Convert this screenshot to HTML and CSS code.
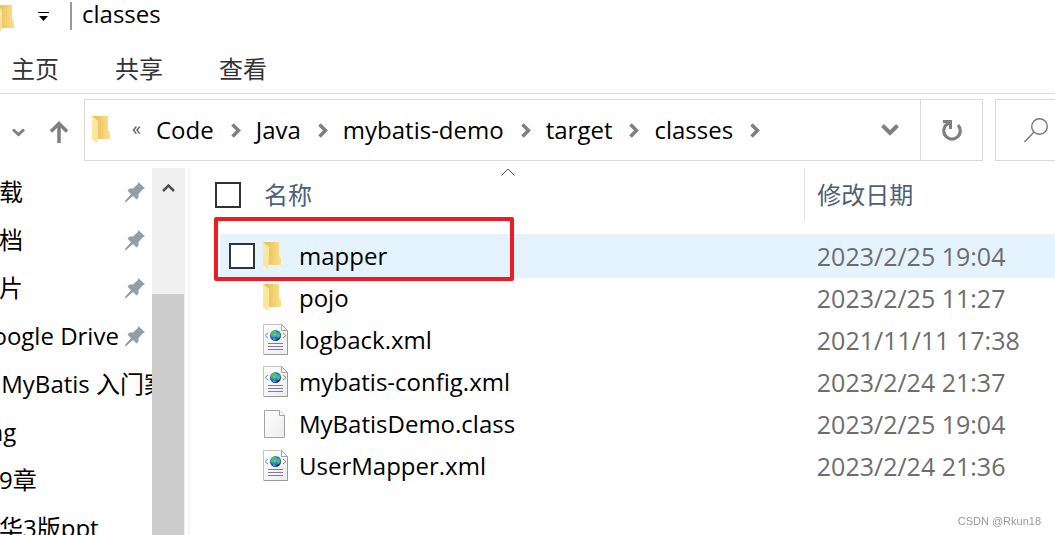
FILE: index.html
```html
<!DOCTYPE html>
<html lang="zh-CN">
<head>
  <meta charset="UTF-8" />
  <meta name="viewport" content="width=device-width, initial-scale=1.0"/>
  <title>classes</title>
  <link rel="stylesheet" href="styles.css">
</head>
<body>

  <!-- Shared icons -->
  <svg class="sprite" aria-hidden="true">
    <defs>
      <linearGradient id="folderBack" x1="0" y1="0" x2="1" y2="0">
        <stop offset="0.2" stop-color="#e9c15a"/>
        <stop offset="1" stop-color="#fbe08a"/>
      </linearGradient>
      <linearGradient id="folderFront" x1="0" y1="0" x2="0" y2="1">
        <stop offset="0" stop-color="#ffe9a8"/>
        <stop offset="1" stop-color="#ffe394"/>
      </linearGradient>
      <linearGradient id="paper" x1="0" y1="0" x2="1" y2="1">
        <stop offset="0" stop-color="#ffffff"/>
        <stop offset="1" stop-color="#ececec"/>
      </linearGradient>
      <radialGradient id="globe" cx="0.4" cy="0.35" r="0.65">
        <stop offset="0" stop-color="#7fd4ff"/>
        <stop offset="0.5" stop-color="#2a86d8"/>
        <stop offset="1" stop-color="#0b2f86"/>
      </radialGradient>
    </defs>
    <symbol id="folder" viewBox="0 0 20 28">
      <path d="M0 0h16v14l2 2v7H5z" fill="url(#folderBack)"/>
      <path d="M0 0l5 4 1 1v17l-1 5-5-4z" fill="url(#folderFront)"/>
    </symbol>
    <symbol id="xml" viewBox="0 0 26 32">
      <path d="M.5.5h18l6 6v24H.5z" fill="url(#paper)" stroke="#c4c4c4"/>
      <path d="M24.500 7v23.500H1" fill="none" stroke="#999"/>
      <path d="M18.500.5v6h6z" fill="#fff" stroke="#a5a5a5"/>
      <path d="M5 9l-3 2.500L5 14M20 9l3 2.500-3 2.500" fill="none" stroke="#888"/>
      <circle cx="12.500" cy="11.500" r="5.500" fill="url(#globe)"/>
      <path d="M8 9q2-3 4-2.500l1 2-2 2-1 2-2-1zM14 10l2-2 1.500 3-1.500 3-2-1zM10 14l3 1-1 1.500-2-1z" fill="#55c431"/>
      <path d="M5 19.500h15M5 22.500h15M5 25.500h15" stroke="#847a9c" stroke-width="1"/>
    </symbol>
    <symbol id="file" viewBox="0 0 26 32">
      <path d="M1.500 2.500h15l5 5v22h-20z" fill="url(#paper)" stroke="#a3a3a3"/>
      <path d="M16.500 2.500v5h5" fill="#fff" stroke="#a3a3a3"/>
    </symbol>
    <symbol id="pin" viewBox="0 0 20 20">
      <path d="M13.500 0L20 6.500 17.500 7.500 13.500 12 13.500 15.500 11.500 17.500 8 14 1 20H0V19L6 12 2.500 8.500 4.500 6.500H8L12.500 2.500z" fill="#929da5"/>
    </symbol>
    <symbol id="crumb" viewBox="0 0 10 15">
      <path d="M1.500 1.500l6 6-6 6" fill="none" stroke="#7f7f7f" stroke-width="3.500"/>
    </symbol>
  </svg>

  <header class="titlebar">
    <svg class="folder title-folder"><use href="#folder"/></svg>
    <button class="icon-btn customize" aria-label="自定义快速访问工具栏">
      <svg width="11" height="9" viewBox="0 0 11 9"><path d="M0 .5h11" stroke="#000"/><path d="M1 4h9L5.500 9z"/></svg>
    </button>
    <span class="divider"></span>
    <h1>classes</h1>
  </header>

  <nav class="ribbon">
    <a href="#">主页</a>
    <a href="#">共享</a>
    <a href="#">查看</a>
  </nav>

  <div class="toolbar">
    <div class="history">
      <button class="icon-btn" aria-label="最近浏览的位置">
        <svg width="13" height="9" viewBox="0 0 13 9"><path d="M1 1.500l5.500 5L12 1.500" fill="none" stroke="#7f7f7f" stroke-width="3"/></svg>
      </button>
      <button class="icon-btn" aria-label="上移">
        <svg width="18" height="22" viewBox="0 0 18 22"><path d="M9 22V3M1 10.500l8-8 8 8" fill="none" stroke="#7f7f7f" stroke-width="3.500"/></svg>
      </button>
    </div>

    <div class="address">
      <svg class="folder"><use href="#folder"/></svg>
      <span class="more">«</span>
      <ol class="crumbs">
        <li><a href="#">Code</a><svg class="crumb"><use href="#crumb"/></svg></li>
        <li><a href="#">Java</a><svg class="crumb"><use href="#crumb"/></svg></li>
        <li><a href="#">mybatis-demo</a><svg class="crumb"><use href="#crumb"/></svg></li>
        <li><a href="#">target</a><svg class="crumb"><use href="#crumb"/></svg></li>
        <li><a href="#">classes</a><svg class="crumb"><use href="#crumb"/></svg></li>
      </ol>
      <button class="icon-btn drop" aria-label="以前的位置">
        <svg width="18" height="12" viewBox="0 0 18 12"><path d="M1.500 1.500L9 9l7.500-7.500" fill="none" stroke="#7f7f7f" stroke-width="4"/></svg>
      </button>
      <button class="icon-btn refresh" aria-label="刷新">
        <svg width="20" height="21" viewBox="0 0 20 21">
          <path d="M4 5a8.300 8.300 0 1 0 12 0" fill="none" stroke="#7f7f7f" stroke-width="3.200"/>
          <path d="M1 0h9v9H7V5L4 7 2 5l2-2H1z" fill="#7f7f7f"/>
        </svg>
      </button>
    </div>

    <button class="icon-btn search" aria-label="搜索">
      <svg width="24" height="25" viewBox="0 0 24 25"><circle cx="15.500" cy="8.500" r="7.800" fill="none" stroke="#777" stroke-width="1.400"/><path d="M10 14L.5 24" stroke="#777" stroke-width="1.400"/></svg>
    </button>
  </div>

  <main class="explorer">
    <ul class="sidebar">
      <li><a href="#">下载</a><svg class="pin"><use href="#pin"/></svg></li>
      <li><a href="#">文档</a><svg class="pin"><use href="#pin"/></svg></li>
      <li><a href="#">图片</a><svg class="pin"><use href="#pin"/></svg></li>
      <li><a href="#">Google Drive</a><svg class="pin"><use href="#pin"/></svg></li>
      <li><a href="#">1. MyBatis 入门案例</a></li>
      <li><a href="#">img</a></li>
      <li><a href="#">第9章</a></li>
      <li><a href="#">清华3版ppt</a></li>
    </ul>

    <div class="scrollbar">
      <button class="icon-btn scroll-up" aria-label="向上滚动">
        <svg width="13" height="9" viewBox="0 0 13 9"><path d="M1 8l5.500-5.500L12 8" fill="none" stroke="#505050" stroke-width="2.500"/></svg>
      </button>
      <div class="thumb"></div>
    </div>

    <section class="files">
      <table>
        <thead>
          <tr>
            <th class="col-name">
              <div class="head">
                <input type="checkbox" aria-label="全选">
                <span>名称</span>
              </div>
              <svg class="sort" width="14" height="8" viewBox="0 0 14 8"><path d="M.5 7.500l6.500-6.500 6.500 6.500" fill="none" stroke="#555"/></svg>
            </th>
            <th class="col-date">修改日期</th>
          </tr>
        </thead>
        <tbody>
          <tr class="hover">
            <td>
              <div class="name"><input type="checkbox" id="mapper"><svg class="folder"><use href="#folder"/></svg><label for="mapper">mapper</label></div>
              <div class="mark"></div>
            </td>
            <td class="date">2023/2/25 19:04</td>
          </tr>
          <tr>
            <td><div class="name"><svg class="folder"><use href="#folder"/></svg>pojo</div></td>
            <td class="date">2023/2/25 11:27</td>
          </tr>
          <tr>
            <td><div class="name"><svg class="doc"><use href="#xml"/></svg>logback.xml</div></td>
            <td class="date">2021/11/11 17:38</td>
          </tr>
          <tr>
            <td><div class="name"><svg class="doc"><use href="#xml"/></svg>mybatis-config.xml</div></td>
            <td class="date">2023/2/24 21:37</td>
          </tr>
          <tr>
            <td><div class="name"><svg class="doc"><use href="#file"/></svg>MyBatisDemo.class</div></td>
            <td class="date">2023/2/25 19:04</td>
          </tr>
          <tr>
            <td><div class="name"><svg class="doc"><use href="#xml"/></svg>UserMapper.xml</div></td>
            <td class="date">2023/2/24 21:36</td>
          </tr>
        </tbody>
      </table>
    </section>
  </main>

  <div class="watermark">CSDN @Rkun18</div>

</body>
</html>
```
FILE: styles.css
```css
* {
  box-sizing: border-box;
}

body {
  margin: 0;
  height: 100vh;
  display: flex;
  flex-direction: column;
  overflow: hidden;
  background: #fff;
  color: #000;
  font-family: "Open Sans", "Noto Sans CJK SC", sans-serif;
  font-size: 24px;
  line-height: 32px;
}

a {
  color: inherit;
  text-decoration: none;
}

ul, ol {
  list-style: none;
  margin: 0;
  padding: 0;
}

svg {
  display: block;
  flex: none;
}

.sprite {
  position: absolute;
  width: 0;
  height: 0;
}

.icon-btn {
  display: flex;
  align-items: center;
  justify-content: center;
  padding: 0;
  border: 0;
  background: none;
}

.folder {
  width: 20px;
  height: 28px;
}

/* Title bar */
.titlebar {
  display: flex;
  align-items: center;
  height: 32px;
}

.title-folder {
  margin: 6px 0 0 -4px;
}

.customize {
  width: 54px;
}

.divider {
  width: 2px;
  height: 28px;
  background: #999;
}

h1 {
  margin: 0 0 4px 10px;
  font-size: 24px;
  font-weight: 400;
}

/* Ribbon tabs */
.ribbon {
  display: flex;
  align-items: center;
  gap: 56px;
  height: 62px;
  padding: 12px 12px 0 11px;
  border-bottom: 1px solid #d9d9d9;
  color: #333;
}

/* Address bar */
.toolbar {
  display: flex;
  padding-top: 5px;
}

.history {
  display: flex;
  align-items: center;
  justify-content: space-between;
  width: 84px;
  padding: 4px 16px 0 12px;
}

.address {
  flex: 1;
  display: flex;
  align-items: center;
  height: 62px;
  padding-left: 7px;
  border: 1px solid #d9d9d9;
}

.more {
  width: 44px;
  padding: 0 0 4px 20px;
  color: #555;
  font-size: 18px;
}

.crumbs {
  display: flex;
  flex: 1;
}

.crumbs li {
  display: flex;
  align-items: center;
}

.crumb {
  width: 10px;
  height: 15px;
  margin: 0 15px 0 17px;
}

.drop {
  width: 60px;
}

.refresh {
  width: 62px;
  height: 100%;
  border-left: 1px solid #d9d9d9;
}

.search {
  width: 60px;
  margin-left: 12px;
  padding-left: 20px;
  border: 1px solid #d9d9d9;
  border-right: 0;
}

/* Navigation pane */
.explorer {
  flex: 1;
  display: flex;
  min-height: 0;
  padding-top: 7px;
}

.sidebar {
  width: 152px;
  overflow: hidden;
}

.sidebar li {
  display: flex;
  align-items: center;
  height: 48px;
  margin-left: -25px;
  padding-right: 7px;
}

.sidebar a {
  flex: 1;
  overflow: hidden;
  white-space: nowrap;
}

.sidebar li:not(:has(.pin)) {
  padding-right: 0;
}

.pin {
  width: 20px;
  height: 20px;
  margin-left: 6px;
}

.scrollbar {
  display: flex;
  flex-direction: column;
  width: 33px;
  background: #f0f0f0;
}

.scroll-up {
  height: 38px;
}

.thumb {
  flex: 1;
  margin: 88px 1px 0 0;
  background: #cdcdcd;
}

/* File list */
.files {
  flex: 1;
  margin-left: 3px;
  padding-left: 31px;
  border-left: 2px solid #f5f5f5;
}

table {
  width: 100%;
  table-layout: fixed;
  border-collapse: collapse;
}

th, td {
  padding: 0;
  font-weight: 400;
  text-align: left;
}

th {
  position: relative;
  height: 54px;
  color: #4c607a;
}

.col-name {
  width: 70%;
}

.col-date {
  padding-left: 12px;
  border-left: 1px solid #e5e5e5;
}

.head {
  display: flex;
  align-items: center;
  gap: 23px;
  margin-left: -6px;
}

.sort {
  position: absolute;
  top: 0;
  left: 48%;
}

/* space between the header and the first row */
tbody::before {
  content: "";
  display: block;
  height: 13px;
}

td {
  position: relative;
  height: 42px;
}

.name {
  display: flex;
  align-items: center;
  padding-left: 42px;
}

.hover {
  background: #e5f3ff;
  outline: 1px solid #e5f3ff;
}

.hover .name {
  gap: 8px;
  padding-left: 8px;
}

.name .folder {
  margin-right: 16px;
}

.hover .name .folder {
  margin-right: 8px;
}

.doc {
  width: 26px;
  height: 32px;
  margin-right: 10px;
}

.date {
  padding-left: 12px;
  color: #6d6d6d;
  font-size: 25px;
}

input[type="checkbox"] {
  appearance: none;
  width: 26px;
  height: 26px;
  margin: 0;
  border: 2px solid #333;
  background: #fff;
}

/* red box round the mapper folder */
.mark {
  position: absolute;
  top: -18px;
  left: -7px;
  width: 300px;
  height: 64px;
  border: 4px solid #ed1c24;
  border-radius: 2px;
  pointer-events: none;
}

.watermark {
  position: fixed;
  right: 14px;
  bottom: 6px;
  color: #999;
  font-family: "Liberation Sans", Arial, sans-serif;
  font-size: 11px;
  line-height: 16px;
}
```
